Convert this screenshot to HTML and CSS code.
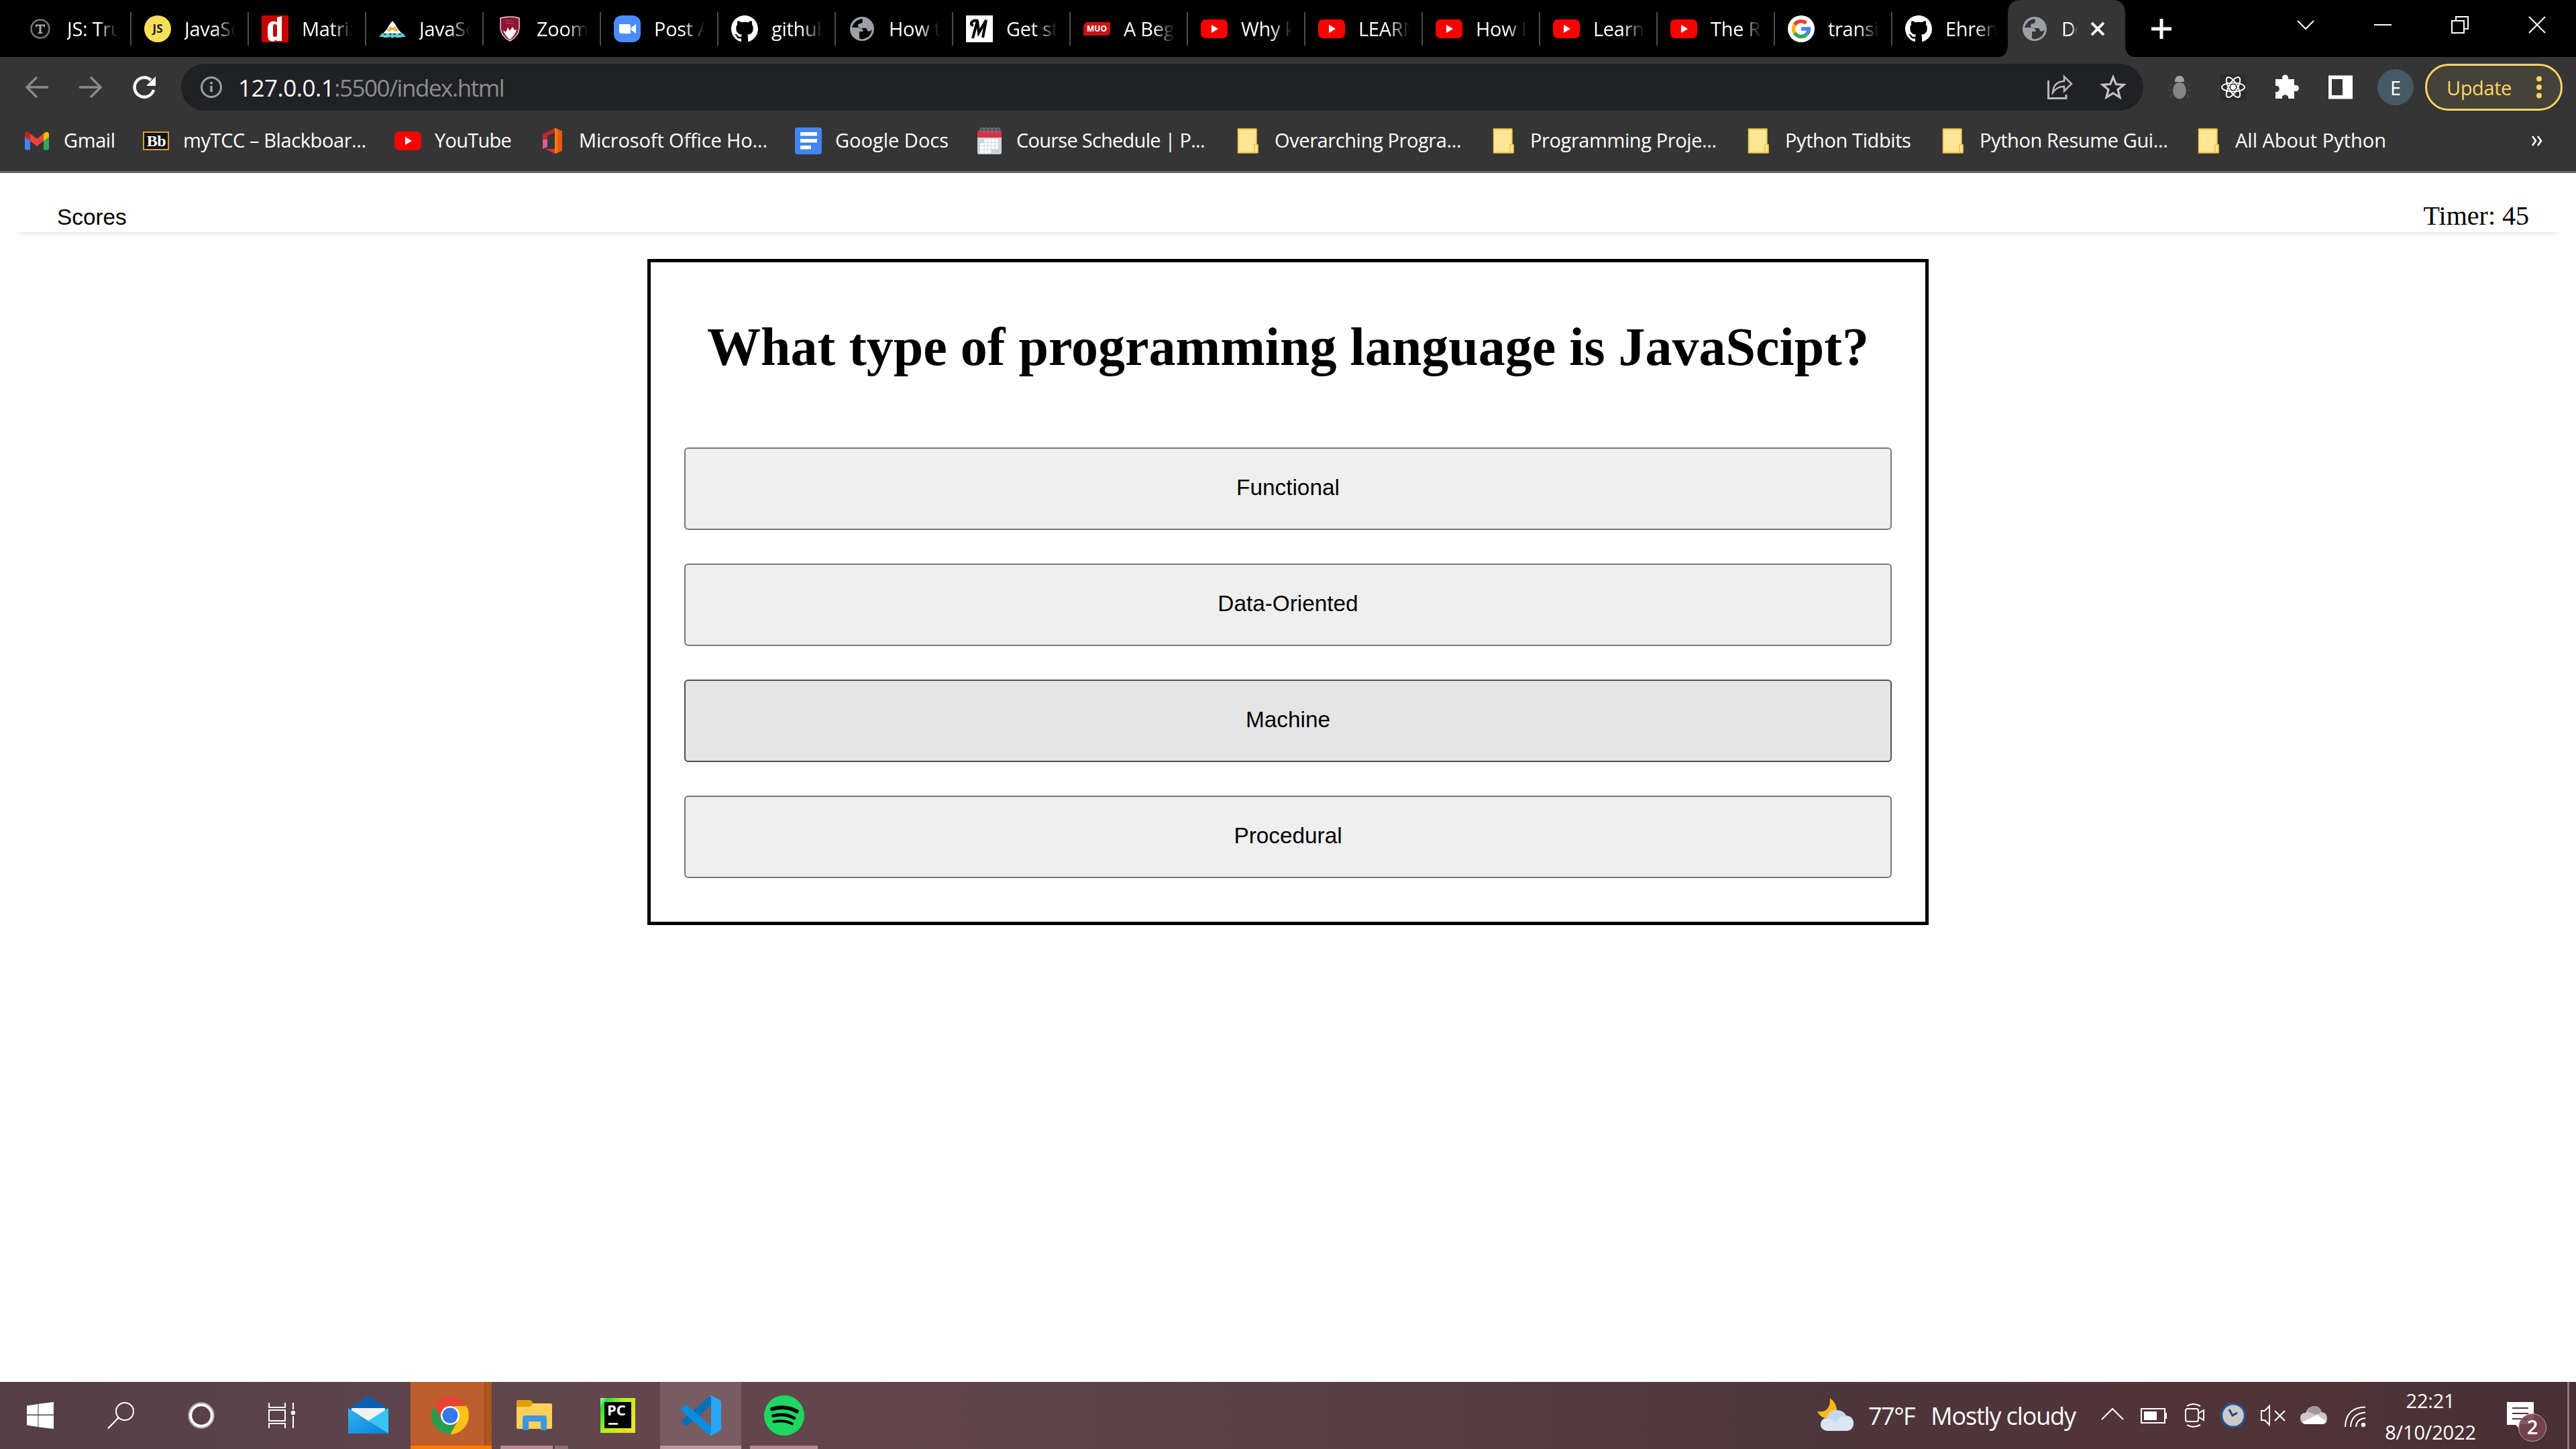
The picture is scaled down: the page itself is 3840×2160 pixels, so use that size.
FILE: index.html
```html
<!DOCTYPE html>
<html lang="en">
<head>
<meta charset="utf-8">
<title>Code Quiz</title>
<link rel="stylesheet" href="styles.css">
</head>
<body>
<svg class="defs" aria-hidden="true">
  <defs>
    <symbol id="yt" viewBox="0 0 40 40"><rect y="6" width="40" height="28" rx="7" fill="#f00"/><path d="M16 14v12l10-6z" fill="#fff"/></symbol>
    <symbol id="globe" viewBox="0 0 40 40"><circle cx="20" cy="20" r="18" fill="#9aa0a6"/><path d="M20 5Q8 7 5 18h10q6 0 7 6h-6v10q2 2 6 1 11-2 13-14-2 3-5 3-3-1-3-5h-9q-4 0-4-4 0-3 4-3 3-1 3-4 0-2-1-3z" fill="var(--hole,#000)"/></symbol>
    <symbol id="github" viewBox="0 0 16 16"><path fill="#fff" d="M8 0C3.58 0 0 3.58 0 8c0 3.54 2.29 6.53 5.47 7.59.4.07.55-.17.55-.38 0-.19-.01-.82-.01-1.49-2.01.37-2.53-.49-2.69-.94-.09-.23-.48-.94-.82-1.13-.28-.15-.68-.52-.01-.53.63-.01 1.08.58 1.23.82.72 1.21 1.87.87 2.33.66.07-.52.28-.87.51-1.07-1.78-.2-3.64-.89-3.64-3.95 0-.87.31-1.59.82-2.15-.08-.2-.36-1.02.08-2.12 0 0 .67-.21 2.2.82.64-.18 1.32-.27 2-.27s1.36.09 2 .27c1.53-1.04 2.2-.82 2.2-.82.44 1.1.16 1.92.08 2.12.51.56.82 1.27.82 2.15 0 3.07-1.87 3.75-3.65 3.95.29.25.54.73.54 1.48 0 1.07-.01 1.93-.01 2.2 0 .21.15.46.55.38A8.01 8.01 0 0 0 16 8c0-4.42-3.58-8-8-8z"/></symbol>
    <symbol id="folder" viewBox="0 0 40 40"><path d="M5.500 2.500h27.500v23h2v12H5.500z" fill="#ffe694" stroke="#e8bf3c" stroke-width="1.500"/><path d="M30 37V26q3-3 5 1v10z" fill="#ffe694" stroke="#e8bf3c" stroke-width="1.500"/><path d="M5 2.500h28M5 37.500h30" stroke="#f2cb4c" stroke-width="2"/></symbol>
  </defs>
</svg>

<header class="tabs">
  <div class="tab"><svg class="ico" viewBox="0 0 40 40"><circle cx="20" cy="20" r="13.500" fill="#0b0b0b" stroke="#777" stroke-width="2.500"/><path d="M13 13.500h14v4h-1.500l-1-2H21.500V25l2 .5V27h-7v-1.500l2-.5v-9.500h-3l-1 2H13z" fill="#aaa"/></svg><span class="label">JS: Tru</span></div>
  <div class="tab"><svg class="ico" viewBox="0 0 40 40"><circle cx="20" cy="20" r="20" fill="#f7df5a"/><text x="20" y="26" class="g-js">JS</text></svg><span class="label">JavaSc</span></div>
  <div class="tab"><svg class="ico" viewBox="0 0 40 40"><rect width="40" height="40" fill="#c80000"/><path d="M23 3l7-2v37h-8v-2q-4 4-9 2-4-2-4-9v-9q0-9 6-11 4-1 8 1zM17 16q0-3 3-3t3 3v13q0 3-3 3t-3-3z" fill="#fff" fill-rule="evenodd"/></svg><span class="label">Matrix</span></div>
  <div class="tab"><svg class="ico" viewBox="0 0 40 40"><path d="M20 8l4 5 4 7 6 7H6l6-7 4-7z" fill="#fff"/><path d="M14 20l3-4 3 3 3-3 4 5 2 2-4 1-5-3-5 3-4-1z" fill="#f2a63c"/><path d="M0 32l5-6 4 3 4-3 4 3 3-2 3 2 4-3 4 3 4-3 5 6H34l-2 1H26l-3-1-3 2-3-2-4 1H8l-3-1z" fill="#5fd0d0"/></svg><span class="label">JavaSc</span></div>
  <div class="tab"><svg class="ico" viewBox="0 0 40 40"><path d="M6 4Q20 0 34 4V19Q33 31 20 38 7 31 6 19z" fill="#8f1530" stroke="#e4d6d8" stroke-width="1.500"/><path d="M10 22l4 3 3-7 3 5 4-6 3 5 3-1q-1 7-10 15-8-7-10-14z" fill="#fff"/><path d="M14 8h11M14 12h12" stroke="#c48" stroke-width="1.500" opacity=".6"/></svg><span class="label">Zoom</span></div>
  <div class="tab"><svg class="ico" viewBox="0 0 40 40"><rect width="40" height="40" rx="12" fill="#4a8cff"/><path d="M8 13h14q3 0 3 3v11H11q-3 0-3-3zM26 18l7-5v14l-7-5z" fill="#fff"/></svg><span class="label">Post A</span></div>
  <div class="tab"><svg class="ico"><use href="#github"/></svg><span class="label">github</span></div>
  <div class="tab"><svg class="ico"><use href="#globe"/></svg><span class="label">How t</span></div>
  <div class="tab"><svg class="ico" viewBox="0 0 40 40"><rect width="40" height="40" fill="#fff"/><path d="M10 34L17 8l2 18L30 7 25 33M11 15q-4-1-3-4 3-5 10-3" fill="none" stroke="#000" stroke-width="4"/></svg><span class="label">Get st</span></div>
  <div class="tab"><svg class="ico" viewBox="0 0 40 40"><path d="M4 10H40V26l-6 4H0V15z" fill="#c81414"/><path d="M34 30l6-5v5z" fill="#7c0808"/><text x="20" y="24" class="g-muo">MUO</text></svg><span class="label">A Beg</span></div>
  <div class="tab"><svg class="ico"><use href="#yt"/></svg><span class="label">Why k</span></div>
  <div class="tab"><svg class="ico"><use href="#yt"/></svg><span class="label">LEARN</span></div>
  <div class="tab"><svg class="ico"><use href="#yt"/></svg><span class="label">How I</span></div>
  <div class="tab"><svg class="ico"><use href="#yt"/></svg><span class="label">Learn</span></div>
  <div class="tab"><svg class="ico"><use href="#yt"/></svg><span class="label">The R</span></div>
  <div class="tab"><svg class="ico" viewBox="0 0 40 40"><circle cx="20" cy="20" r="20" fill="#fff"/><g fill="none" stroke-width="5.500"><path d="M27.500 11.500A11.500 11.500 0 0 0 10.200 14" stroke="#ea4335"/><path d="M10.200 14A11.500 11.500 0 0 0 10.200 26" stroke="#fbbc05"/><path d="M10.200 26A11.500 11.500 0 0 0 28 28.300" stroke="#34a853"/><path d="M28 28.300A11.500 11.500 0 0 0 31.500 20H20" stroke="#4285f4"/></g></svg><span class="label">transis</span></div>
  <div class="tab last"><svg class="ico"><use href="#github"/></svg><span class="label">Ehren</span></div>
  <div class="tab active">
    <svg class="tab-shape" viewBox="0 0 205 85"><path d="M0 85Q15 85 15 65V20Q15 0 35 0H170Q190 0 190 20V65Q190 85 205 85z" fill="#353535"/></svg>
    <svg class="ico"><use href="#globe"/></svg><span class="label">Do</span>
    <svg class="close" viewBox="0 0 20 20"><path d="M1 1l18 18M19 1L1 19" stroke="#fff" stroke-width="4"/></svg>
  </div>
  <svg class="plus" viewBox="0 0 30 30"><path d="M15 0v30M0 15h30" stroke="#fff" stroke-width="5"/></svg>
  <div class="window-controls">
    <svg viewBox="0 0 26 26"><path d="M1 7l12 12L25 7" class="thin"/></svg>
    <svg viewBox="0 0 26 26"><path d="M0 13h26" class="thin"/></svg>
    <svg viewBox="0 0 26 26"><path d="M1 7h18v18H1zM7 7V1h18v18h-6" class="thin"/></svg>
    <svg viewBox="0 0 26 26"><path d="M1 1l24 24M25 1L1 25" class="thin"/></svg>
  </div>
</header>

<div class="toolbar">
  <div class="nav">
    <svg viewBox="0 0 40 40"><path d="M37 20H6M20 5L5 20l15 15" fill="none" stroke="#8a8a8a" stroke-width="3.500"/></svg>
    <svg viewBox="0 0 40 40"><path d="M3 20h31M20 5l15 15-15 15" fill="none" stroke="#8a8a8a" stroke-width="3.500"/></svg>
    <svg viewBox="0 0 40 40"><path d="M34 24A14.500 14.500 0 1 1 30 9.500" fill="none" stroke="#fff" stroke-width="4.500"/><path d="M37 4v14H23z" fill="#fff"/></svg>
  </div>
  <div class="omnibox">
    <svg class="info" viewBox="0 0 34 34"><circle cx="17" cy="17" r="14.500" fill="none" stroke="#9aa0a6" stroke-width="3"/><path d="M17 15v9M17 9v3.500" stroke="#9aa0a6" stroke-width="3.500"/></svg>
    <span class="url">127.0.0.1<span class="path">:5500/index.html</span></span>
    <svg class="share" viewBox="0 0 40 40"><path d="M2.500 10v26.500H29V31" fill="none" stroke="#b8b8b8" stroke-width="3"/><path d="M9 28q1-16 17-17V4l11 11-11 11v-7q-11 0-17 9z" fill="none" stroke="#b8b8b8" stroke-width="2.500"/></svg>
    <svg class="star" viewBox="0 0 40 40"><path d="M20 5l4.300 10.500L36 16.300l-9 7.400 3 11.300-10-6.200L10 35l3-11.300-9-7.400 11.700-.8z" fill="none" stroke="#c4c4c4" stroke-width="3.200"/></svg>
  </div>
  <div class="extensions">
    <svg viewBox="0 0 40 40"><path d="M13 12q0-9 7-9t7 9z" fill="#a3a3a3"/><ellipse cx="20" cy="25" rx="10" ry="12.500" fill="#858585"/><path d="M8 15l-3 3m27-3l3 3M8 24H3m29 0h5M9 31l-3 5m25-5l3 5" stroke="#4c4c4c" stroke-width="2"/></svg>
    <svg viewBox="0 0 40 40"><rect width="40" height="40" rx="3" fill="#2d2d2d"/><circle cx="20" cy="20" r="4" fill="#fff"/><g fill="none" stroke="#fff" stroke-width="2"><ellipse cx="20" cy="20" rx="17" ry="6.500"/><ellipse cx="20" cy="20" rx="17" ry="6.500" transform="rotate(60 20 20)"/><ellipse cx="20" cy="20" rx="17" ry="6.500" transform="rotate(120 20 20)"/></g></svg>
    <svg viewBox="0 0 40 40"><path d="M3 8H13V6a4.500 4.500 0 0 1 9 0V8H31V17h2.500a4.500 4.500 0 0 1 0 9H31V37H22V34a5 5 0 0 0-9 0v3H3V27H6a5 5 0 0 0 0-9H3z" fill="#fff"/></svg>
    <svg viewBox="0 0 40 40"><path d="M2 2.500h36v35H2zM7 8v24h16V8z" fill="#fff" fill-rule="evenodd"/></svg>
  </div>
  <div class="avatar">E</div>
  <div class="update"><span>Update</span><svg viewBox="0 0 8 34"><circle cx="4" cy="4.500" r="4"/><circle cx="4" cy="17" r="4"/><circle cx="4" cy="29.500" r="4"/></svg></div>
</div>

<nav class="bookmarks">
  <a><svg class="ico" viewBox="0 0 40 40"><path d="M2 10v21q0 2.500 2.500 2.500H10V16z" fill="#4285f4"/><path d="M38 10v21q0 2.500-2.500 2.500H30V16z" fill="#34a853"/><path d="M10 9l10 8 10-8v11l-10 8-10-8z" fill="#ea4335"/><path d="M2 11q0-5 5-4l3 2v11l-8-6z" fill="#c5221f"/><path d="M38 11q0-5-5-4l-3 2v11l8-6z" fill="#fbbc04"/></svg><span>Gmail</span></a>
  <a><svg class="ico" viewBox="0 0 40 40"><rect x="1" y="7" width="37" height="26" fill="#111" stroke="#dba02c" stroke-width="2"/><text x="20" y="28" class="g-bb">Bb</text></svg><span>myTCC – Blackboar...</span></a>
  <a><svg class="ico"><use href="#yt"/></svg><span class="snug">YouTube</span></a>
  <a><svg class="ico" viewBox="0 0 40 40"><path d="M24 1l11 4v30l-11 4z" fill="#e8590c"/><path d="M24 1l4 1v36l-4 1z" fill="#f57c00"/><path d="M24 1v7l-11 4v17l-7 3V10z" fill="#c4262e"/><path d="M6 18v14l7-3V18z" fill="#e0569a"/><path d="M10 32h14v7z" fill="#e0303a"/></svg><span class="loose">Microsoft Office Ho...</span></a>
  <a><svg class="ico" viewBox="0 0 40 40"><rect width="40" height="40" rx="4" fill="#4285f4"/><path d="M8 7h25v5.500H8zM8 17h25v5.500H8zM8 27h16v5.500H8z" fill="#fff"/></svg><span class="natural">Google Docs</span></a>
  <a><svg class="ico" viewBox="0 0 40 40"><path d="M2 10h36v27q0 3-3 3H5q-3 0-3-3z" fill="#ccd6dd"/><path d="M2 15V8q0-4 3-4h30q3 0 3 4v7z" fill="#dd2e44"/><path d="M12 17h21v15h-10v6H6V23h6z" fill="#fff"/><path d="M12 17v21M17.500 17v21M22.500 17v21M28 17v15M6 22.500h27M6 27.500h27M6 33h17" stroke="#ccd6dd"/><path d="M7 8q-2-7 2-7t2 7m2 0q-2-7 2-7t2 7m2 0q-2-7 2-7t2 7m2 0q-2-7 2-7t2 7m2 0q-2-7 2-7t2 7" fill="none" stroke="#66757f" stroke-width="2"/></svg><span class="snug">Course Schedule | P...</span></a>
  <a><svg class="ico"><use href="#folder"/></svg><span>Overarching Progra...</span></a>
  <a><svg class="ico"><use href="#folder"/></svg><span>Programming Proje...</span></a>
  <a><svg class="ico"><use href="#folder"/></svg><span>Python Tidbits</span></a>
  <a><svg class="ico"><use href="#folder"/></svg><span>Python Resume Gui...</span></a>
  <a><svg class="ico"><use href="#folder"/></svg><span class="natural">All About Python</span></a>
  <svg class="more" viewBox="0 0 16 16"><path d="M1 1l5 7-5 7M9 1l5 7-5 7" fill="none" stroke="#fff" stroke-width="2.600"/></svg>
</nav>

<main class="page">
  <div class="quiz-header"><span class="scores">Scores</span><span class="timer">Timer: 45</span></div>
  <section class="quiz">
    <h1>What type of programming language is JavaScipt?</h1>
    <div class="answers">
      <button>Functional</button>
      <button>Data-Oriented</button>
      <button class="hovered">Machine</button>
      <button>Procedural</button>
    </div>
  </section>
</main>

<footer class="taskbar">
  <div class="system">
    <svg viewBox="0 0 40 40"><path d="M0 5.500L16.500 3v15.500H0zM17.500 2.800L40 0v18.500H17.500zM0 20h16.500v17L0 34.500zM17.500 20H40v20l-22.500-2.800z" fill="#fff"/></svg>
    <svg viewBox="0 0 40 40"><circle cx="26" cy="14" r="13" fill="none" stroke="#fff" stroke-width="2"/><path d="M16.500 23.500L1 39.500" stroke="#fff" stroke-width="2.200"/></svg>
    <svg viewBox="0 0 40 40"><circle cx="20" cy="20" r="18.500" fill="none" stroke="#fff" stroke-opacity=".5" stroke-width="2.500"/><circle cx="20" cy="20" r="15.800" fill="none" stroke="#fff" stroke-width="4"/></svg>
    <svg viewBox="0 0 40 40"><path d="M1 1v7h24V1M1 12h24v16H1zM1 39v-7h24v7M37 1v10M37 21v18" fill="none" stroke="#fff" stroke-width="2"/><circle cx="37" cy="16" r="3.200" fill="#fff"/></svg>
  </div>
  <div class="apps">
    <div class="app mail"><svg width="60" height="56" viewBox="0 0 60 56"><defs><linearGradient id="mail" x1="0" y1="0" x2="1" y2="1"><stop stop-color="#2fb4f0"/><stop offset="1" stop-color="#0b7fdb"/></linearGradient></defs><path d="M0 19L30 0l30 19v8H0z" fill="#0a5fb4"/><path d="M5 18h50v12L30 40 5 30z" fill="#f1f1f1"/><path d="M0 18l60 38H0z" fill="url(#mail)"/><path d="M60 18L30 37l30 19z" fill="#36c4f4"/></svg></div>
    <div class="app chrome"><svg width="56" height="56" viewBox="0 0 56 56"><path d="M3.800 14A28 28 0 0 1 52.200 14H28L16 35z" fill="#ea4335"/><path d="M52.200 14A28 28 0 0 1 28 56L40 35 34 14z" fill="#fbc116"/><path d="M28 56A28 28 0 0 1 3.800 14L16 35 28 42h8z" fill="#2a9d4b"/><circle cx="28" cy="28" r="14" fill="#fff"/><circle cx="28" cy="28" r="11.500" fill="#3079ee"/></svg><i class="stack"></i></div>
    <div class="app explorer"><svg width="54" height="46" viewBox="0 0 54 46"><path d="M0 2Q0 0 2 0h17q2 0 3 1l4 5-5 7H0z" fill="#e0a000"/><path d="M0 10h20l5-5h26q2 0 2 2v34q0 2-2 2H2q-2 0-2-2z" fill="#ffd05a"/><path d="M9 45V27q0-4 4-4h28q4 0 4 4v18h-9V32H18v13z" fill="#3b98e0"/></svg></div>
    <div class="app"><svg width="52" height="52" viewBox="0 0 52 52"><defs><linearGradient id="pc" x1="0" y1="0" x2="1" y2=".6"><stop stop-color="#b8ffc0"/><stop offset=".15" stop-color="#21e03c"/><stop offset=".5" stop-color="#b4f01e"/><stop offset="1" stop-color="#e8e41e"/></linearGradient></defs><rect width="52" height="52" fill="url(#pc)"/><rect x="6" y="6" width="40" height="39" fill="#000"/><text x="10" y="26" class="g-pc">PC</text><path d="M12 38.500h14" stroke="#fff" stroke-width="2.600"/></svg></div>
    <div class="app vscode"><svg width="62" height="60" viewBox="0 0 62 60"><path d="M1 39l6 6q2 1 4 0L46 14V0L44 1 1 39z" fill="#0070b8"/><path d="M1 20l6-5q2-1 4 0l35 31v14l-3-1L1 22z" fill="#0a8edb"/><path d="M46 0l13 7q2 1 2 3v40q0 2-2 3l-13 7-2-1q2-1 2-4V5q0-3-2-4z" fill="#27a6f4"/></svg></div>
    <div class="app spotify"><svg width="60" height="60" viewBox="0 0 60 60"><circle cx="30" cy="30" r="30" fill="#1ed760"/><g fill="none" stroke="#000" stroke-linecap="round"><path d="M12 20.500Q32 14.500 49 24" stroke-width="5.600"/><path d="M13.500 30.500Q30 26 45 34" stroke-width="4.600"/><path d="M14.500 39.500Q29 36 42 42.500" stroke-width="3.800"/></g></svg></div>
  </div>
  <div class="weather">
    <svg width="56" height="52" viewBox="0 0 56 52"><path d="M20 0q11 8 10 21-4 10-18 9Q4 27 1 20q20 3 19-20z" fill="#fdb813"/><path d="M18 49Q6 48 6 39q1-9 9-9 3-12 15-12 10 0 14 8 11 1 11 12-1 11-11 11z" fill="#c5d6ee"/><path d="M18 49Q6 48 6 39q1-9 10-8 8 0 12 6 4-10 14-10 13 1 13 11-1 11-11 11z" fill="#dce6f3"/></svg>
    <span class="temp">77°F</span><span class="sky">Mostly cloudy</span>
  </div>
  <div class="tray">
    <svg viewBox="0 0 40 40"><path d="M4 26l16-16 16 16" class="thin"/></svg>
    <svg viewBox="0 0 40 40"><path d="M2 10h35v21H2z" class="thin"/><path d="M6 14h19v13H6zM37 16h3v9h-3z" fill="#fff"/></svg>
    <svg viewBox="0 0 40 40"><rect x="7" y="10" width="19" height="19" rx="3" class="thin"/><path d="M26 17l8-5v15l-8-5M9 6q9-6 20 0M9 34q9 6 20 0" class="thin"/></svg>
    <svg viewBox="0 0 40 40"><circle cx="20" cy="20" r="17.500" fill="#c9c9c9" stroke="#2a4f8c" stroke-width="3.500"/><path d="M14 11l5 9 7-4" fill="none" stroke="#1d4480" stroke-width="3"/></svg>
    <svg viewBox="0 0 40 40"><path d="M3 13h5l7-7v28l-7-7H3zM23 13l15 15M38 13L23 28" class="thin"/></svg>
    <svg viewBox="0 0 40 40"><path d="M8 33q-8-1-8-9t8-8q4-10 13-10 8 0 11 9 8 1 8 9t-7 9z" fill="#cfc6c8"/><path d="M10 14q5-9 13-8 7 1 9 9l-8 4z" fill="#a3979a"/><path d="M3 30l22-11 14 10q-2 4-6 4H8q-3 0-5-3z" fill="#fff"/></svg>
    <svg viewBox="0 0 40 40"><path d="M6 37Q7 8 36 7.500M14 37q1-20 22-21.500M22 37q1-12 14-13" class="thin"/><circle cx="33" cy="34" r="3.200" fill="#fff"/></svg>
  </div>
  <div class="clock"><span>22:21</span><span>8/10/2022</span></div>
  <div class="notifications"><svg width="40" height="41" viewBox="0 0 40 41"><path d="M0 0h40v33H20v8l-7-7H0z" fill="#fff"/><path d="M8 9h24M8 17h24M8 25h24" stroke="#4b3338" stroke-width="2"/></svg><b>2</b></div>
  <i class="show-desktop"></i>
</footer>
</body>
</html>
```
FILE: styles.css
```css
* { box-sizing: border-box; }
body {
  margin: 0;
  width: 3840px;
  height: 2160px;
  overflow: hidden;
  display: flex;
  flex-direction: column;
  background: #fff;
  font-family: "Open Sans", "Noto Sans", sans-serif;
  font-size: 29px;
  color: #fff;
}
svg { display: block; flex: none; }
.defs { display: none; }
.ico { width: 40px; height: 40px; }
.thin { fill: none; stroke: #fff; stroke-width: 2; }

/* Tab strip */
.tabs {
  height: 85px;
  background: #000;
  display: flex;
  align-items: center;
  padding-left: 21px;
  flex: none;
}
.tab {
  width: 175px;
  height: 50px;
  flex: none;
  display: flex;
  align-items: center;
  gap: 20px;
  padding-left: 19px;
  border-right: 2px solid #4d4d4d;
}
.tab.last { border-color: transparent; }
.label {
  width: 76px;
  overflow: hidden;
  white-space: nowrap;
  letter-spacing: -.3px;
  -webkit-mask-image: linear-gradient(90deg, #000 60%, transparent);
  mask-image: linear-gradient(90deg, #000 60%, transparent);
}
.tab.active {
  height: 85px;
  position: relative;
  border: 0;
  padding-left: 17px;
  --hole: #353535;
}
.tab-shape {
  position: absolute;
  left: -18px;
  top: 0;
  width: 205px;
  height: 85px;
}
.active .ico, .active .label { position: relative; }
.active .label { width: 24px; letter-spacing: -1.5px; }
.close { position: relative; width: 20px; height: 20px; }
.plus { width: 30px; height: 30px; margin-left: 36px; }
.window-controls {
  display: flex;
  gap: 89px;
  margin-left: auto;
  padding: 0 45px 12px 0;
}
.window-controls svg { width: 26px; height: 26px; }

/* Toolbar */
.toolbar {
  height: 90px;
  background: #353535;
  display: flex;
  align-items: center;
  flex: none;
  padding: 0 20px 0 35px;
}
.nav { display: flex; gap: 40px; width: 235px; }
.nav svg { width: 40px; height: 40px; }
.omnibox {
  width: 2925px;
  height: 70px;
  border-radius: 35px;
  background: #202124;
  display: flex;
  align-items: center;
  padding: 0 25px 0 28px;
}
.info { width: 34px; height: 34px; }
.url { font-size: 35px; margin-left: 23px; letter-spacing: -.5px; }
.path { color: #8c8d8f; letter-spacing: -1.45px; }
.share { width: 40px; height: 40px; margin-left: auto; }
.star { width: 40px; height: 40px; margin-left: 39px; }
.extensions { display: flex; gap: 40px; margin-left: 34px; }
.extensions svg { width: 40px; height: 40px; }
.avatar {
  width: 54px;
  height: 54px;
  margin-left: 35px;
  border-radius: 50%;
  background: #455a64;
  display: grid;
  place-items: center;
}
.update {
  width: 205px;
  height: 70px;
  margin-left: auto;
  border: 3px solid #fdd663;
  border-radius: 35px;
  background: #45423a;
  color: #fdd663;
  fill: #fdd663;
  display: flex;
  align-items: center;
  justify-content: space-between;
  padding: 0 28px 0 29px;
  letter-spacing: -.4px;
}
.update svg { width: 8px; height: 34px; }

/* Bookmarks */
.bookmarks {
  height: 83px;
  flex: none;
  background: #353535;
  border-bottom: 3px solid #656565;
  display: grid;
  grid-template-columns: 178px 375px 215px 382px 270px 385px 381px 380px 290px 381px 502px 16px;
  align-items: center;
  padding: 0 0 11px 35px;
}
.bookmarks a {
  display: flex;
  gap: 20px;
  align-items: center;
  white-space: nowrap;
  letter-spacing: -.4px;
}
.bookmarks span { padding-bottom: 2px; }
.bookmarks .snug { letter-spacing: -.75px; }
.bookmarks .loose { letter-spacing: -.15px; }
.bookmarks .natural { letter-spacing: 0; }
.more { width: 16px; height: 16px; }

/* Quiz page */
.page { flex: 1; color: #000; }
.quiz-header {
  height: 88px;
  margin: 0 20px;
  padding: 0 50px 0 65px;
  display: flex;
  justify-content: space-between;
  align-items: baseline;
  line-height: 128px;
  box-shadow: 0 10px 7px -8px rgba(0, 0, 0, .12);
}
.scores { font: 33.33px/128px "Liberation Sans", Arial, sans-serif; }
.timer { font: 40px/128px "Liberation Serif", "Times New Roman", serif; }
.quiz {
  width: 1910px;
  height: 993px;
  margin: 40px auto 0;
  border: 5px solid #000;
  padding: 0 50px;
}
.quiz h1 {
  margin: 0;
  padding-top: 80px;
  height: 276px;
  font: bold 80px/92px "Liberation Serif", "Times New Roman", serif;
  text-align: center;
  white-space: nowrap;
}
.answers { display: grid; gap: 50px; }
.answers button {
  height: 123px;
  padding: 0 0 3px;
  border: 2px solid #767676;
  border-radius: 6px;
  background: #efefef;
  color: #000;
  font: 33.33px "Liberation Sans", Arial, sans-serif;
}
.answers .hovered { background: #e5e5e5; border-color: #4f4f4f; }

/* Taskbar */
.taskbar {
  height: 100px;
  flex: none;
  display: flex;
  background: linear-gradient(90deg, #543f46, #5c434b 13%, #64474d 27%, #5a4047 50%, #4d363c 71%, #523438 85%, #483035);
}
.system { display: flex; width: 488px; padding-left: 40px; gap: 80px; align-items: center; }
.system svg { width: 40px; height: 40px; }
.apps { display: flex; gap: 3px; }
.app {
  width: 121px;
  height: 100px;
  position: relative;
  display: grid;
  place-items: center;
}
.app.mail { padding-bottom: 3px; }
.app::after {
  content: "";
  position: absolute;
  bottom: 0;
  left: 10px;
  height: 5px;
}
.chrome { background: #bd5f2d; padding-right: 3px; }
.chrome::after { left: 0; width: 121px; background: #ff7a00; }
.stack {
  position: absolute;
  right: 0;
  top: 0;
  width: 11px;
  height: 95px;
  background: #ad5621;
  border-left: 2px solid #a04d1b;
}
.explorer::after { width: 101px; background: linear-gradient(90deg, #b78b94 78px, #62464d 78px 81px, #916e76 81px); }
.vscode { background: #785c62; }
.vscode::after { left: 0; width: 121px; background: #bf969e; }
.spotify::after { width: 101px; background: #b78b94; }
.weather {
  display: flex;
  align-items: center;
  margin-left: auto;
  width: 421px;
  font-size: 36px;
  white-space: nowrap;
}
.temp { margin-left: 21px; letter-spacing: -1.5px; }
.sky { margin-left: 24px; letter-spacing: -1.15px; }
.tray { display: grid; grid-template-columns: 61px 61px 58px 59px 61px 61px 65px; align-items: center; width: 426px; }
.tray svg { width: 40px; height: 40px; }
.clock {
  width: 136px;
  display: flex;
  flex-direction: column;
  align-items: center;
  line-height: 47px;
  padding-top: 4px;
  letter-spacing: -.2px;
}
.notifications { position: relative; width: 90px; padding: 30px 0 0 46px; }
.notifications b {
  position: absolute;
  left: 63px;
  top: 47px;
  width: 42px;
  height: 42px;
  border: 1.5px solid #b9a0a6;
  border-radius: 50%;
  background: rgba(122, 68, 80, .9);
  font-size: 29px;
  font-weight: 600;
  line-height: 38px;
  text-align: center;
}
.show-desktop { width: 13px; margin-left: 46px; border-left: 3px solid #8c7b80; }

/* Lettering inside icons */
.g-js { font: bold 17px "Open Sans", sans-serif; text-anchor: middle; fill: #222; }
.g-muo { font: bold 12px "Open Sans", sans-serif; text-anchor: middle; fill: #fff; }
.g-bb { font: bold 24px "Liberation Serif", serif; text-anchor: middle; fill: #fff; }
.g-pc { font: bold 22px "Open Sans", sans-serif; fill: #fff; }
```
